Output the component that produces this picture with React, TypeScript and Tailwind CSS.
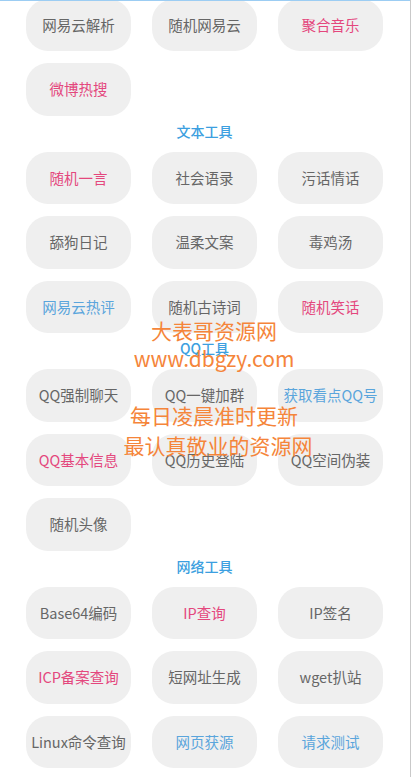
type Tone = 'gray' | 'pink' | 'blue';

interface Tool {
    name: string;
    tone: Tone;
}

const toneClass: Record<Tone, string> = {
    gray: 'text-[#666666]',
    pink: 'text-[#e4477d]',
    blue: 'text-[#5aa5dc]',
};

const sections: { title?: string; tools: Tool[] }[] = [
    {
        tools: [
            { name: '网易云解析', tone: 'gray' },
            { name: '随机网易云', tone: 'gray' },
            { name: '聚合音乐', tone: 'pink' },
            { name: '微博热搜', tone: 'pink' },
        ],
    },
    {
        title: '文本工具',
        tools: [
            { name: '随机一言', tone: 'pink' },
            { name: '社会语录', tone: 'gray' },
            { name: '污话情话', tone: 'gray' },
            { name: '舔狗日记', tone: 'gray' },
            { name: '温柔文案', tone: 'gray' },
            { name: '毒鸡汤', tone: 'gray' },
            { name: '网易云热评', tone: 'blue' },
            { name: '随机古诗词', tone: 'gray' },
            { name: '随机笑话', tone: 'pink' },
        ],
    },
    {
        title: 'QQ工具',
        tools: [
            { name: 'QQ强制聊天', tone: 'gray' },
            { name: 'QQ一键加群', tone: 'gray' },
            { name: '获取看点QQ号', tone: 'blue' },
            { name: 'QQ基本信息', tone: 'pink' },
            { name: 'QQ历史登陆', tone: 'gray' },
            { name: 'QQ空间伪装', tone: 'gray' },
            { name: '随机头像', tone: 'gray' },
        ],
    },
    {
        title: '网络工具',
        tools: [
            { name: 'Base64编码', tone: 'gray' },
            { name: 'IP查询', tone: 'pink' },
            { name: 'IP签名', tone: 'gray' },
            { name: 'ICP备案查询', tone: 'pink' },
            { name: '短网址生成', tone: 'gray' },
            { name: 'wget扒站', tone: 'gray' },
            { name: 'Linux命令查询', tone: 'gray' },
            { name: '网页获源', tone: 'blue' },
            { name: '请求测试', tone: 'blue' },
        ],
    },
];

const ToolButton = ({ tool }: { tool: Tool }) => (
    <button
        className={`h-[52.5px] w-[105px] rounded-[22px] bg-[#efefef] text-[14.5px] whitespace-nowrap flex items-center justify-center ${toneClass[tool.tone]}`}
    >
        {tool.name}
    </button>
);

export default function App() {
    return (
        <div
            className="relative w-[411px] h-[777px] overflow-hidden bg-white border-r border-[#c9c9c9]"
            style={{ fontFamily: '"Noto Sans CJK SC", "Noto Sans", sans-serif' }}
        >
            <div className="-mt-[1.5px] pl-[26px]">
                {sections.map((section, i) => (
                    <div key={i}>
                        {section.title && (
                            <div className="h-[36px] w-[357px] pt-[5px] text-center leading-[20px] text-[14px] font-medium text-[#3c9fe0]">
                                {section.title}
                            </div>
                        )}
                        <div className="grid grid-cols-[105px_105px_105px] gap-x-[21px] gap-y-[12px]">
                            {section.tools.map((tool) => (
                                <ToolButton key={tool.name} tool={tool} />
                            ))}
                        </div>
                    </div>
                ))}
            </div>

            {/* top edge line */}
            <div className="absolute top-0 left-0 right-0 h-px bg-[#9ccdf3]" />

            {/* watermark */}
            <div className="absolute left-0 right-0 top-[316px] pl-[18px] flex flex-col items-center text-[21px] leading-[28px] text-[#f5853a] pointer-events-none">
                <span>大表哥资源网</span>
                <span>www.dbgzy.com</span>
                <span className="mt-[28px] leading-[30px]">每日凌晨准时更新</span>
                <span className="leading-[30px] pl-[8px]">最认真敬业的资源网</span>
            </div>
        </div>
    );
}
